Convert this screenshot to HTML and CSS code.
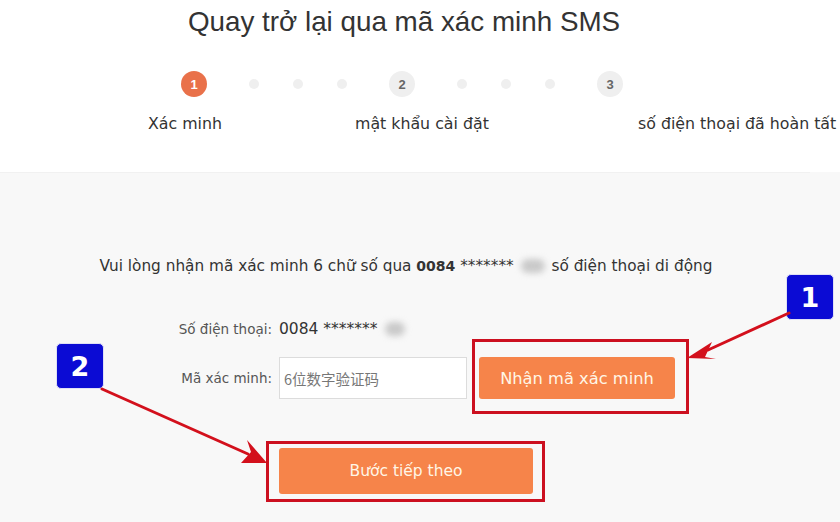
FILE: index.html
```html
<!DOCTYPE html>
<html lang="vi">
<head>
<meta charset="utf-8">
<title>Quay trở lại qua mã xác minh SMS</title>
<link rel="stylesheet" href="styles.css">
</head>
<body>
<div class="page">
  <header class="top">
    <h1 class="title">Quay trở lại qua mã xác minh SMS</h1>
    <div class="steps">
      <span class="circle active">1</span>
      <span class="dot"></span><span class="dot"></span><span class="dot"></span>
      <span class="circle">2</span>
      <span class="dot"></span><span class="dot"></span><span class="dot"></span>
      <span class="circle">3</span>
    </div>
    <div class="labels">
      <span class="lab lab1">Xác minh</span>
      <span class="lab lab2">mật khẩu cài đặt</span>
      <span class="lab lab3">số điện thoại đã hoàn tất</span>
    </div>
  </header>
  <main class="body">
    <p class="msg">Vui lòng nhận mã xác minh 6 chữ số qua <b>0084</b> ******* <span class="blur"></span> số điện thoại di động</p>
    <div class="form">
      <div class="row">
        <span class="label">Số điện thoại:</span>
        <span class="value">0084 ******* <span class="blur small"></span></span>
      </div>
      <div class="row row-code">
        <span class="label">Mã xác minh:</span>
        <div class="input">6位数字验证码</div>
        <div class="btn-wrap">
          <button class="btn btn-code">Nhận mã xác minh</button>
          <span class="mark mark-code"></span>
        </div>
      </div>
      <div class="row row-next">
        <span class="label"></span>
        <div class="btn-wrap">
          <button class="btn btn-next">Bước tiếp theo</button>
          <span class="mark mark-next"></span>
        </div>
      </div>
    </div>
  </main>
  <span class="badge badge1">1</span>
  <span class="badge badge2">2</span>
  <svg class="arrows" width="840" height="522" viewBox="0 0 840 522">
    <g stroke="#d3101c" stroke-width="3" fill="none" stroke-linecap="round">
      <line x1="789" y1="313" x2="708" y2="350"/>
      <line x1="102" y1="389" x2="248" y2="454"/>
    </g>
    <g fill="#d3101c">
      <polygon points="687,358 712,342 705,357 716,359"/>
      <polygon points="267,463 241,463 251,452 247,440"/>
    </g>
  </svg>
</div>
</body>
</html>
```
FILE: styles.css
```css
html, body {
  margin: 0;
  padding: 0;
}
body {
  width: 840px;
  height: 522px;
  overflow: hidden;
  background: #f8f8f8;
  font-family: "DejaVu Sans", sans-serif;
  color: #333;
}
.page {
  position: relative;
  width: 840px;
  height: 522px;
}
.top {
  background: #fff;
  height: 172px;
  box-sizing: border-box;
  padding-top: 7px;
}
.title {
  margin: 0;
  width: 808px;
  text-align: center;
  font-family: "Liberation Sans", Arial, sans-serif;
  font-weight: normal;
  font-size: 27.8px;
  line-height: 30px;
  color: #333;
}
.steps {
  display: flex;
  align-items: center;
  gap: 34px;
  padding-left: 181px;
  margin-top: 34px;
  height: 26px;
}
.circle {
  width: 26px;
  height: 26px;
  border-radius: 50%;
  background: #efefef;
  color: #666;
  font-family: "Liberation Sans", Arial, sans-serif;
  font-weight: bold;
  font-size: 13px;
  display: flex;
  align-items: center;
  justify-content: center;
  margin: 0 8px;
}
.circle:first-child {
  margin-left: 0;
}
.circle.active {
  background: #e9714a;
  color: #fff;
}
.dot {
  width: 10px;
  height: 10px;
  border-radius: 50%;
  background: #efefef;
}
.labels {
  display: flex;
  margin-top: 17px;
  padding-left: 148px;
  font-size: 15.8px;
  line-height: 20px;
  color: #333;
  white-space: nowrap;
}
.lab1 { width: 207px; }
.lab2 { width: 283px; }
.body {
  border-top: 1px solid #f1f1f1;
  width: 810px;
}
.msg {
  margin: 83px 0 0;
  padding-left: 2px;
  text-align: center;
  font-size: 15.3px;
  line-height: 20px;
  color: #333;
}
.msg b {
  font-weight: bold;
  font-size: 14px;
}
.blur {
  display: inline-block;
  width: 24px;
  height: 14px;
  background: #c9c9c9;
  border-radius: 7px;
  filter: blur(3px);
  vertical-align: -2px;
  margin: 0 2px;
}
.blur.small {
  width: 20px;
}
.form {
  margin-top: 44px;
  display: flex;
  flex-direction: column;
}
.row {
  display: flex;
  align-items: center;
}
.row-code {
  margin-top: 19px;
}
.row-next {
  margin-top: 49px;
}
.label {
  text-align: right;
  padding-right: 7px;
  box-sizing: border-box;
  width: 279px;
  font-size: 13.5px;
  color: #555;
  white-space: nowrap;
}
.value {
  font-size: 15.5px;
  color: #333;
}
.input {
  width: 188px;
  height: 42px;
  box-sizing: border-box;
  border: 1px solid #dcdcdc;
  background: #fff;
  display: flex;
  align-items: center;
  padding-left: 4px;
  font-family: "Noto Sans CJK SC", sans-serif;
  font-size: 14.5px;
  color: #777;
}
.btn-wrap {
  position: relative;
}
.btn {
  border: none;
  border-radius: 3px;
  background: #f6844a;
  color: #fff6e6;
  font-family: "DejaVu Sans", sans-serif;
  padding: 0;
  display: block;
}
.btn-code {
  margin-left: 12px;
  width: 196px;
  height: 42px;
  font-size: 16.3px;
}
.btn-next {
  width: 254px;
  height: 46px;
  font-size: 15.5px;
}
.mark {
  position: absolute;
  border: 3px solid #cc1020;
  box-sizing: border-box;
}
.mark-code {
  left: 5px;
  top: -18px;
  width: 217px;
  height: 75px;
}
.mark-next {
  left: -13px;
  top: -7px;
  width: 279px;
  height: 61px;
}
.badge {
  position: absolute;
  width: 48px;
  height: 46px;
  box-sizing: border-box;
  background: #0b0bd4;
  border: 1px solid #dfe0f5;
  border-radius: 5px;
  color: #fff;
  font-family: "DejaVu Sans", sans-serif;
  font-weight: bold;
  font-size: 27px;
  display: flex;
  align-items: center;
  justify-content: center;
}
.badge1 { left: 786px; top: 274px; }
.badge2 { left: 56px; top: 343px; }
.arrows {
  position: absolute;
  left: 0;
  top: 0;
  pointer-events: none;
}
```
